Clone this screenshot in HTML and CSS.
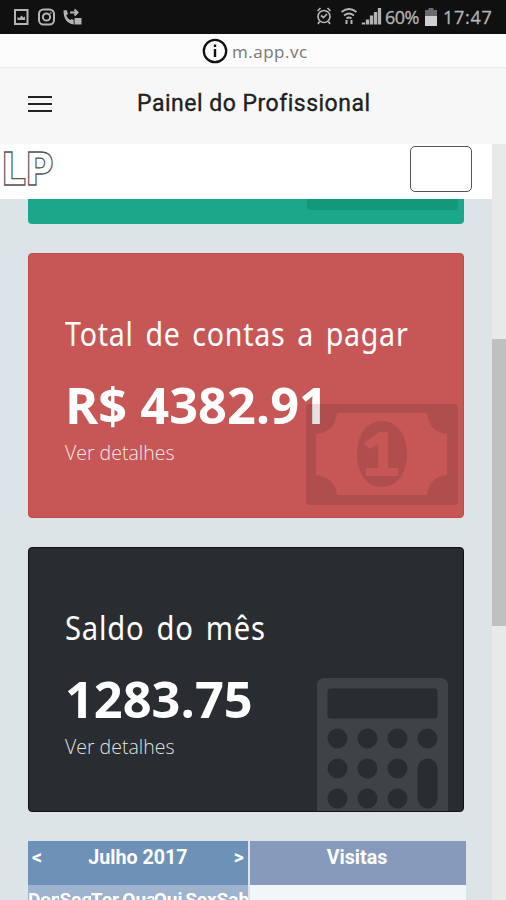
FILE: index.html
```html
<!DOCTYPE html>
<html lang="pt-BR">
<head>
<meta charset="utf-8">
<title>Painel do Profissional</title>
<link rel="stylesheet" href="styles.css">
</head>
<body>
<div class="screen">
  <div class="status">
    <div class="notices">
      <svg width="72" height="18" viewBox="0 0 72 18" fill="none" stroke="#b4b4b4" stroke-width="2">
        <rect x="2" y="2" width="12.500" height="14"/><path d="M4.500 12V9l2 1 2-2.500 2 2 1.500-1v3.500z" fill="#b4b4b4" stroke="none"/>
        <rect x="26" y="1.500" width="15" height="15" rx="4.500"/><circle cx="33.500" cy="9" r="3.600"/><circle cx="37.800" cy="4.900" r=".8" fill="#b4b4b4" stroke="none"/>
        <path d="M50.500 2.500l3-.5 1.500 4-1.800 1.500q1 3 4 4.500l1.500-1 2 1v4.500Q50.500 15 50.500 2.500z" fill="#b4b4b4" stroke="none"/>
        <path d="M57 4.500h7M61.500 1.500l3 3-3 3"/><path d="M61.500 16.500V10h7v6.500z" fill="#b4b4b4" stroke="none"/>
      </svg>
    </div>
    <div class="system">
      <svg width="66" height="20" viewBox="0 0 66 20" fill="none" stroke="#b4b4b4" stroke-width="1.700">
        <circle cx="8" cy="10.500" r="6"/><path d="M5 9.500l2.500 2L11 8M1.500 5l3-3M14.500 5l-3-3M3.500 15.500l-1.500 2.500M12.500 15.500l1.500 2.500"/>
        <path d="M25.500 6q7.500-6 15 0M28 9.500q5-4 10 0M30.500 12.500q2.500-2 5 0"/><path d="M30.500 14v4M35.500 18v-4" stroke-width="2"/>
        <path d="M47.500 18.500v-2M51.500 18.500v-5M55.500 18.500v-9M59.500 18.500V6M63.500 18.500V2" stroke-width="3.300"/>
      </svg>
      <span class="percent">60%</span>
      <svg class="battery" width="12" height="18" viewBox="0 0 12 18"><path d="M3.500 0h5v2H12v16H0V2h3.500z" fill="#6a6a6a"/><path d="M0 8h12v10H0z" fill="#d0d0d0"/></svg>
      <span class="clock">17:47</span>
    </div>
  </div>
  <div class="address">
    <svg width="26" height="26" viewBox="0 0 26 26"><circle cx="13" cy="13" r="11.200" fill="none" stroke="#111" stroke-width="2.300"/><path d="M13 11v8M13 6.500v2.500" stroke="#111" stroke-width="2.400"/></svg>
    <span class="url">m.app.vc</span>
  </div>
  <header class="appbar">
    <div class="burger"><i></i><i></i><i></i></div>
    <h1>Painel do Profissional</h1>
  </header>
  <div class="viewport">
    <main>
      <nav><span class="logo">LP</span><div class="toggle"></div></nav>
      <div class="content">
        <section class="card green"><div class="bill-edge"></div></section>
        <section class="card red">
          <h2><span class="fit-total">Total de contas a pagar</span></h2>
          <div class="amount"><span>R$ 4382.91</span></div>
          <a>Ver detalhes</a>
          <svg class="bill" width="152" height="101" viewBox="0 0 152 101">
            <path fill-rule="evenodd" d="M4 0h144q4 0 4 4v93q0 4-4 4H4q-4 0-4-4V4q0-4 4-4zM31 9Q29 28 10 30V71Q29 73 31 91H121Q123 73 141 71V30Q123 28 121 9z"/>
            <path fill-rule="evenodd" d="M76 17c16 0 25 15 25 33s-9 33-25 33-25-15-25-33 9-33 25-33zM73 28L58 39l5 6 9-5v24H60v8h32v-8H82V28z"/>
          </svg>
        </section>
        <section class="card dark">
          <h2><span class="fit-saldo">Saldo do mês</span></h2>
          <div class="amount"><span>1283.75</span></div>
          <a>Ver detalhes</a>
          <svg class="calc" width="131" height="133" viewBox="0 0 131 133">
            <path d="M8 0h115q8 0 8 8v125H0V8Q0 0 8 0z" fill="#3f4347"/>
            <g fill="#292d31"><rect x="10.500" y="10.500" width="110" height="30" rx="3"/>
            <circle cx="20.500" cy="60.500" r="10"/><circle cx="50.500" cy="60.500" r="10"/><circle cx="80.500" cy="60.500" r="10"/><circle cx="110.500" cy="60.500" r="10"/>
            <circle cx="20.500" cy="90.500" r="10"/><circle cx="50.500" cy="90.500" r="10"/><circle cx="80.500" cy="90.500" r="10"/><rect x="100.500" y="80.500" width="20" height="50" rx="10"/>
            <circle cx="20.500" cy="120.500" r="10"/><circle cx="50.500" cy="120.500" r="10"/><circle cx="80.500" cy="120.500" r="10"/></g>
          </svg>
        </section>
        <section class="agenda">
          <div class="month">
            <div class="month-head"><span>&lt;</span><span>Julho 2017</span><span>&gt;</span></div>
            <div class="days"><span>Dom</span><span>Seg</span><span>Ter</span><span>Qua</span><span>Qui</span><span>Sex</span><span>Sab</span></div>
          </div>
          <div class="visits"><div class="visits-head">Visitas</div></div>
        </section>
      </div>
    </main>
    <div class="scroll"><div class="thumb"></div></div>
  </div>
</div>
</body>
</html>
```
FILE: styles.css
```css
* { box-sizing: border-box; }
body { margin: 0; font-family: Roboto, sans-serif; }
.screen { width: 506px; height: 900px; overflow: hidden; display: flex; flex-direction: column; }
svg { display: block; flex: none; }
.status { height: 34px; flex: none; background: #101010; color: #b4b4b4; display: flex; justify-content: space-between; padding: 0 11px 0 13px; }
.notices { padding-top: 8px; }
.system { display: flex; padding-top: 6px; font: 18px/22px "Open Sans", sans-serif; -webkit-text-stroke: .3px #b4b4b4; }
.percent { margin-left: 3px; width: 36px; letter-spacing: -.5px; }
.battery { margin: 2px 6px 0 4px; }
.clock { width: 52px; letter-spacing: .7px; }
.address { height: 34px; flex: none; background: #fcfcfc; display: flex; align-items: center; padding-left: 202px; gap: 4px; border-bottom: 1px solid #ececec; }
.url { font: 17px/22px "Open Sans", sans-serif; color: #777; letter-spacing: .5px; padding-top: 2px; }
.appbar { height: 76px; flex: none; background: #f7f7f7; display: flex; align-items: center; padding: 0 0 5px 28px; }
.burger { width: 24px; display: grid; gap: 5px; }
.burger i { height: 2px; background: #222; }
h1 { margin: 0 0 0 85px; font-size: 23px; line-height: 30px; font-weight: 400; color: #202020; -webkit-text-stroke: .35px #202020; letter-spacing: .5px; white-space: nowrap; }
.viewport { height: 756px; display: flex; }
main { width: 492px; overflow: hidden; background: #dce4e7; }
nav { height: 55px; background: #fff; display: flex; justify-content: space-between; padding: 0 20px 0 1px; }
.logo { font: bold 44px/51px "DejaVu Sans", sans-serif; transform: scaleX(.89); transform-origin: 0 50%; letter-spacing: -1px; color: #fff; -webkit-text-stroke: 1.3px #555; }
.toggle { width: 62px; height: 46px; margin-top: 2px; border: 1px solid #555; border-radius: 5px; }
.content { padding: 0 27px 0 28px; }
.card { position: relative; overflow: hidden; border-radius: 4px; height: 265px; margin-bottom: 29px; padding: 56px 0 0 36px; color: #fff; width: 436px; }
.card.green { height: 25px; background: #1aa78a; border-radius: 0 0 4px 4px; padding: 0 6px 0 279px; }
.bill-edge { height: 11px; border-radius: 0 0 4px 4px; background: #13997a; }
.red { background: #c75757; border: 1px solid #be4c4d; }
.dark { background: #292d31; border: 1px solid #101316; }
h2 { margin: 0; font: 33px/48px "Noto Sans", sans-serif; letter-spacing: .9px; word-spacing: 4px; white-space: nowrap; }
h2 span { display: inline-block; transform-origin: 0 50%; }
.fit-total { transform: scaleX(.865); }
.fit-saldo { transform: scaleX(.885); }
.amount { font: bold 50.500px/62px "Open Sans", sans-serif; margin-top: 16px; white-space: nowrap; }
.card a { display: block; font: 300 19.500px/26px "Open Sans", sans-serif; margin-top: 4px; color: rgba(255,255,255,.88); }
.bill { position: absolute; right: 5px; bottom: 12px; fill: rgba(0,0,0,.115); }
.calc { position: absolute; right: 15px; bottom: 0; }
.agenda { display: flex; gap: 2px; width: 438px; height: 90px; color: #fff; font-weight: 700; font-size: 19.700px; }
.month { width: 220px; background: #9db3ce; }
.month-head { height: 44px; background: #6d91b7; display: flex; justify-content: space-between; padding: 0 4px; line-height: 33px; }
.days { display: grid; grid-template-columns: repeat(7, 1fr); font-size: 19px; line-height: 30px; }
.days span { min-width: 0; overflow: hidden; }
.visits { flex: 1; background: #f1f6fb; }
.visits-head { height: 44px; background: #869bbc; text-align: center; line-height: 33px; padding-right: 2px; }
.scroll { width: 14px; background: #e9e9e9; padding-top: 195px; }
.thumb { height: 287px; background: #c0c0c0; }
```
